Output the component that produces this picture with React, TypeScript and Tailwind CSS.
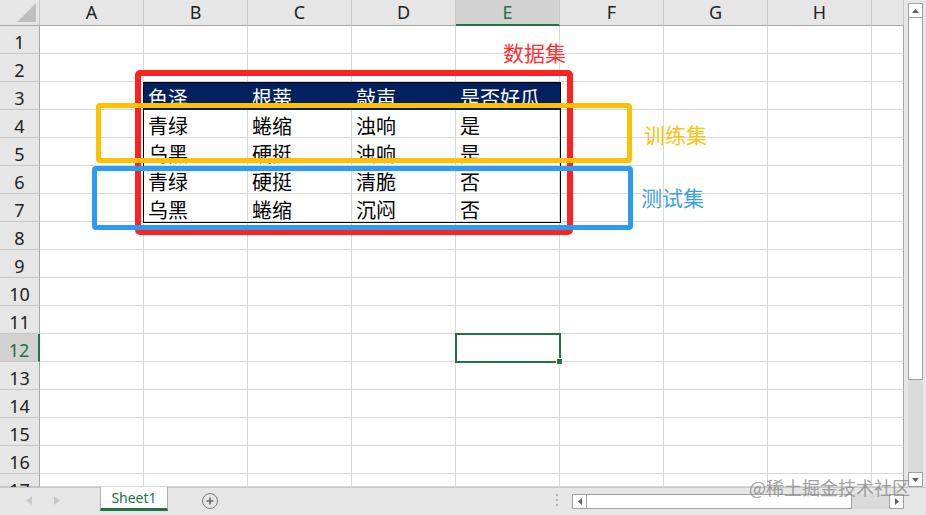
import React from "react";

const COLS = ["A", "B", "C", "D", "E", "F", "G", "H", ""];
const ROWS = Array.from({ length: 17 }, (_, i) => i + 1);

const DATA: Record<number, string[]> = {
  3: ["色泽", "根蒂", "敲声", "是否好瓜"],
  4: ["青绿", "蜷缩", "浊响", "是"],
  5: ["乌黑", "硬挺", "浊响", "是"],
  6: ["青绿", "硬挺", "清脆", "否"],
  7: ["乌黑", "蜷缩", "沉闷", "否"],
};

const cjk = { fontFamily: '"Noto Sans CJK SC", "Noto Sans", sans-serif' };
const hdr = { fontFamily: '"Noto Sans", "Liberation Sans", sans-serif' };

function Cell({ r, c }: { r: number; c: number }) {
  const row = DATA[r];
  const inTable = row && c >= 1 && c <= 4;
  const text = inTable ? row[c - 1] : "";
  const navy = r === 3 && inTable;
  return (
    <div
      className={
        "border-r border-b flex items-center pt-[4px] pl-[4px] text-[20px] leading-none whitespace-nowrap overflow-visible " +
        (navy
          ? "bg-[#002060] text-white border-[#002060]"
          : "bg-white text-black border-[#d9d9d9]") +
        (c === 8 ? " border-r-[#a6a6a6]" : "")
      }
      style={cjk}
    >
      {text}
    </div>
  );
}

export default function App() {
  return (
    <div className="w-[926px] h-[515px] bg-[#e6e6e6] flex flex-col overflow-hidden relative">
      <div className="flex h-[487px]">
        <div className="relative w-[904px] h-[487px] overflow-hidden">
          <div className="grid grid-cols-[40px_repeat(8,104px)_32px] grid-rows-[26px_repeat(16,28px)_13px] w-[904px]">
            {/* corner */}
            <div className="bg-[#e6e6e6] border-r border-b border-r-[#c6c6c6] border-b-[#a6a6a6] relative">
              <svg className="absolute right-[3px] bottom-[3px]" width="19" height="19" viewBox="0 0 19 19">
                <polygon points="19,0 19,19 0,19" fill="#bfbfbf" />
              </svg>
            </div>
            {COLS.map((c, i) => (
              <div
                key={"h" + i}
                className={
                  "flex items-center justify-center text-[18px] border-r " +
                  (c === "E"
                    ? "bg-[#d2d2d2] text-[#217346] border-b-2 border-b-[#217346] border-r-[#c6c6c6]"
                    : "bg-[#e6e6e6] text-[#222] border-b border-b-[#a6a6a6] border-r-[#c6c6c6]")
                }
                style={hdr}
              >
                {c}
              </div>
            ))}
            {ROWS.map((r) => (
              <React.Fragment key={r}>
                <div
                  className={
                    "flex items-start justify-center pt-[3px] text-[18px] border-b border-b-[#c6c6c6] " +
                    (r === 12
                      ? "bg-[#d2d2d2] text-[#217346] border-r-2 border-r-[#217346]"
                      : "bg-[#e6e6e6] text-[#222] border-r border-r-[#a6a6a6]")
                  }
                  style={hdr}
                >
                  {r}
                </div>
                {COLS.map((_, ci) => (
                  <Cell key={ci} r={r} c={ci} />
                ))}
              </React.Fragment>
            ))}
          </div>

          {/* table outline */}
          <div className="absolute left-[143px] top-[82px] w-[418px] h-[141px] border border-black pointer-events-none" />

          {/* selection E12 */}
          <div className="absolute left-[455px] top-[333px] w-[106px] h-[30px] border-2 border-[#217346] pointer-events-none" />
          <div className="absolute left-[556px] top-[358px] w-[7px] h-[7px] bg-[#217346] border border-white pointer-events-none" />

          {/* annotation boxes */}
          <div className="absolute left-[135px] top-[70px] w-[438px] h-[165px] border-[6px] border-[#ff2020] rounded-[5px] pointer-events-none" />
          <div className="absolute left-[96px] top-[103px] w-[536px] h-[60px] border-[5px] border-[#ffc000] rounded-[4px] pointer-events-none" />
          <div className="absolute left-[92px] top-[166px] w-[541px] h-[64px] border-[5px] border-[#2c9cf2] rounded-[4px] pointer-events-none" />

          <div className="absolute left-[503px] top-[42px] text-[21px] leading-none text-[#ff3030]" style={cjk}>
            数据集
          </div>
          <div className="absolute left-[644px] top-[124px] text-[21px] leading-none text-[#ffc20e]" style={cjk}>
            训练集
          </div>
          <div className="absolute left-[641px] top-[187px] text-[21px] leading-none text-[#3a9fe8]" style={cjk}>
            测试集
          </div>
        </div>

        {/* vertical scrollbar */}
        <div className="w-[22px] pl-[4px] pt-[3px]">
          <div className="w-[15px] h-[484px] flex flex-col">
            <div className="h-[15px] bg-white border border-[#a0a0a0] flex items-center justify-center">
              <svg width="7" height="4" viewBox="0 0 7 4"><polygon points="0,4 7,4 3.5,0" fill="#606060" /></svg>
            </div>
            <div className="h-[362px] bg-white border-x border-b border-[#a0a0a0]" />
            <div className="flex-1 bg-[#dadada]" />
            <div className="h-[15px] bg-white border border-[#a0a0a0] flex items-center justify-center">
              <svg width="7" height="4" viewBox="0 0 7 4"><polygon points="0,0 7,0 3.5,4" fill="#606060" /></svg>
            </div>
          </div>
        </div>
      </div>

      {/* bottom bar */}
      <div className="h-[28px] flex items-start border-t border-[#c6c6c6] relative">
        <div className="w-[100px] h-[24px] flex items-center">
          <svg className="ml-[26px]" width="6" height="9" viewBox="0 0 6 9"><polygon points="6,0 6,9 0,4.5" fill="#c8c8c8" /></svg>
          <svg className="ml-[22px]" width="6" height="9" viewBox="0 0 6 9"><polygon points="0,0 0,9 6,4.5" fill="#c8c8c8" /></svg>
        </div>
        <div className="w-[68px] h-[24px] -mt-px bg-white border-x border-[#b0b0b0] border-b-[3px] border-b-[#217346] flex items-center justify-center text-[14px] text-[#217346]" style={hdr}>
          Sheet1
        </div>
        <div className="ml-[34px] mt-[5px] w-[16px] h-[16px] rounded-full border-[1.5px] border-[#7a7a7a] flex items-center justify-center">
          <svg width="8" height="8" viewBox="0 0 8 8"><path d="M4 0.5V7.5M0.5 4H7.5" stroke="#6a6a6a" strokeWidth="1.6" /></svg>
        </div>
        <div className="ml-[338px] mt-[6px] flex flex-col gap-[3px]">
          <div className="w-[2px] h-[2px] bg-[#b0b0b0]" />
          <div className="w-[2px] h-[2px] bg-[#b0b0b0]" />
          <div className="w-[2px] h-[2px] bg-[#b0b0b0]" />
        </div>
        <div className="ml-[14px] mt-[6px] w-[332px] h-[15px] flex">
          <div className="w-[15px] h-[15px] bg-white border border-[#a0a0a0] flex items-center justify-center">
            <svg width="4" height="7" viewBox="0 0 4 7"><polygon points="4,0 4,7 0,3.5" fill="#606060" /></svg>
          </div>
          <div className="w-[265px] h-[15px] bg-white border-y border-r border-[#a0a0a0]" />
          <div className="flex-1 bg-[#dadada]" />
          <div className="w-[15px] h-[15px] bg-white border border-[#a0a0a0] flex items-center justify-center">
            <svg width="4" height="7" viewBox="0 0 4 7"><polygon points="0,0 0,7 4,3.5" fill="#606060" /></svg>
          </div>
        </div>
      </div>

      {/* watermark */}
      <div className="absolute left-[749px] top-[478px] text-[18px] leading-none text-[#8a8a8a] opacity-80" style={cjk}>
        @稀土掘金技术社区
      </div>
    </div>
  );
}
